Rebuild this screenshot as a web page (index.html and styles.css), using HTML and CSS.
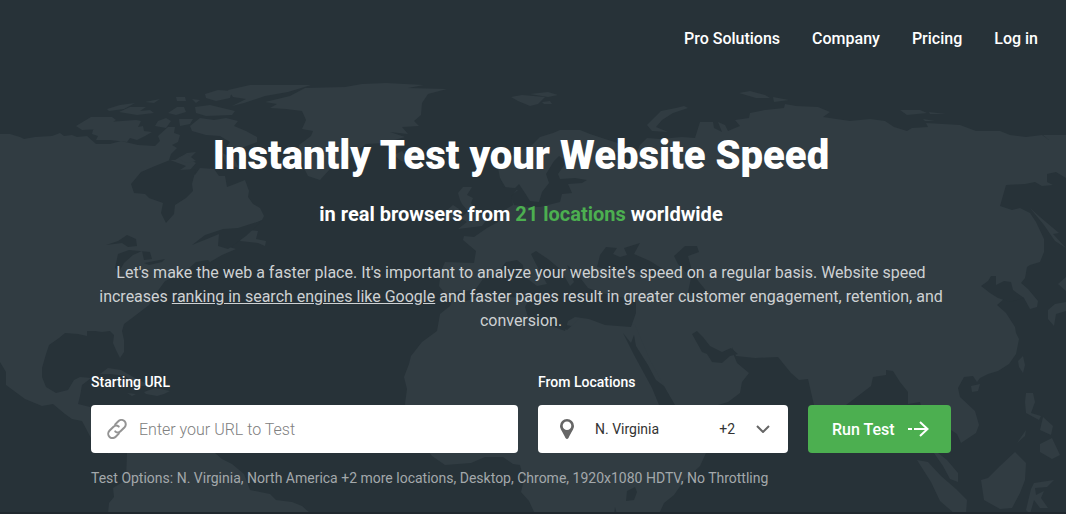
FILE: index.html
```html
<!DOCTYPE html>
<html lang="en">
<head>
    <meta charset="UTF-8">
    <meta name="viewport" content="width=device-width, initial-scale=1.0">
    <title>Website Speed Test</title>
    <link rel="stylesheet" href="styles.css">
</head>

<body>
    <div class="hero">
        <svg class="world-map" viewBox="0 0 1066 514" preserveAspectRatio="xMidYMin slice" aria-hidden="true">
            <g class="land">
                <!-- North and Central America -->
                <path d="M0 134L10 134 20 137 24 139 35 137 52 136 60 133 64 136 72 135 77 137 87 136 96 144 110 144 121 141 138 145 155 146 160 141 158 136 168 127 175 127 174 133 180 135 178 142 172 145 177 148 171 154 169 160 175 160 187 153 196 152 189 159 196 163 190 170 195 175 200 168 214 169 219 176 225 176 227 187 235 184 245 180 249 191 248 197 253 204 260 208 264 216 262 220 250 226 248 230 258 231 256 239 266 241 265 246 258 243 240 241 243 232 232 238 225 246 236 249 222 255 210 262 208 260 196 262 188 269 176 276 165 281 157 292 149 305 136 315 124 324 122 331 124 340 124 352 120 358 116 350 113 343 114 335 110 331 102 332 95 331 87 331 87 336 78 334 65 333 59 338 49 345 46 354 42 368 42 377 46 387 56 393 68 390 74 380 80 377 91 378 82 385 80 396 78 404 90 407 95 440 112 450 109 454 92 440 82 421 72 419 65 414 53 404 42 406 25 399 6 385 6 372 0 362Z"/>
                <!-- South America -->
                <path d="M127 453L126 480 113 488 114 497 109 503 108 514 311 514 302 506 292 502 276 500 270 494 250 490 244 474 232 464 222 459 215 453Z"/>
                <!-- Arctic islands -->
                <path d="M76 126L91 117 112 117 116 120 100 129 82 130ZM93 130L108 122 136 120 141 121 138 127 143 126 144 131 152 132 145 136 137 140 130 138 127 142 110 140 96 140 98 136 92 134ZM107 109L120 105 135 103 124 109 109 111ZM119 112L130 107 146 107 140 111 150 110 154 113 137 115ZM145 102L160 99 154 103ZM168 113L177 107 184 107 186 112 176 115ZM176 97L185 97 186 101 177 101ZM192 99L200 100 196 103ZM195 107L210 105 235 111 232 115 206 116 196 113ZM205 94L218 90 232 91 230 98 216 101 206 98ZM228 90L250 85 311 85 288 92 265 96 244 103 232 106 246 99 233 97ZM158 121L166 118 171 121 166 128 155 126ZM179 119L193 119 190 124 180 126ZM190 126L200 118 214 120 226 118 238 121 234 126 246 131 257 137 257 142 244 147 238 152 226 147 230 142 220 136 206 135 192 131ZM178 158L187 154 196 161 186 163ZM222 153L234 158 239 168 226 164Z"/>
                <!-- Greenland, Iceland, Svalbard -->
                <path d="M265 102L290 96 305 88 345 87 362 84 386 83 424 85 408 88 447 89 428 94 422 103 421 115 414 121 419 126 402 127 408 134 390 132 405 137 384 143 366 144 354 153 344 167 330 169 320 180 308 176 303 166 300 154 299 145 311 136 313 131 302 129 306 120 302 111 286 109 270 108 277 104ZM394 155L402 151 404 154 418 151 424 157 410 163 401 161ZM511 97L522 95 545 97 538 104 530 106 518 101ZM530 94L548 92 558 95 548 97ZM542 102L550 101 552 104 544 104Z"/>
                <!-- Britain and Ireland -->
                <path d="M458 193L463 187 472 187 467 195 473 198 471 203 478 213 487 219 482 226 458 229 467 222 461 218 468 211 462 204 460 200ZM444 213L453 205 459 209 455 218 445 221Z"/>
                <!-- Novaya Zemlya and the Siberian islands -->
                <path d="M647 125L655 117 661 111 676 108 684 106 688 108 673 113 662 120 656 127 668 132 652 131ZM739 93L750 91 765 95 770 98 756 98ZM773 97L789 100 774 102ZM900 110L920 110 927 113 907 115ZM929 112L946 114 930 114ZM923 119L935 121 925 121Z"/>
                <!-- Europe and Asia -->
                <path d="M500 178L498 168 506 159 520 151 532 145 540 137 553 133 560 130 580 130 590 134 605 139 621 144 626 152 616 155 636 154 640 145 647 138 660 139 682 137 695 138 700 122 713 122 714 128 722 132 718 122 725 125 728 131 735 128 740 126 735 120 749 118 750 113 765 110 784 108 785 104 796 106 818 107 830 112 823 117 850 121 870 119 885 121 894 127 907 131 912 128 928 127 926 123 960 125 976 131 1000 131 1010 135 1026 137 1042 135 1049 140 1043 135 1066 135 1066 178 1056 172 1047 174 1047 182 1053 185 1042 186 1035 182 1025 184 1006 185 1000 206 1012 210 1020 208 1030 213 1036 222 1044 239 1044 252 1040 262 1030 265 1027 267 1025 278 1021 283 1028 289 1038 301 1037 307 1030 309 1024 298 1012 292 997 305 1006 313 1015 327 1016 333 1019 339 1016 354 1009 364 998 371 988 374 980 378 977 382 973 376 964 377 958 388 960 397 975 411 979 425 976 433 964 441 961 443 957 434 951 430 948 440 938 453 947 460 958 473 958 482 950 479 943 466 934 453 928 430 920 402 908 404 908 392 900 382 893 371 886 370 886 375 873 377 871 386 858 396 846 405 843 440 835 446 822 430 814 405 808 379 799 380 791 373 778 357 755 358 736 356 732 347 733 353 737 363 749 373 742 382 740 393 728 402 718 405 680 420 660 400 590 330 450 300 439 286 441 271 445 262 474 263 476 251 463 240 464 236 474 237 487 228 498 222 503 211 513 205 512 196 518 188 506 188Z"/>
                <!-- Africa -->
                <path d="M455 293L480 292 525 305 567 330 580 318 635 325 650 360 674 405 716 440 706 453 700 466 683 482 674 495 664 503 659 514 535 514 529 501 521 492 524 480 520 465 513 464 503 457 485 457 471 463 445 465 432 456 410 428 405 404 407 389 404 377 409 364 411 356 422 342 437 331 440 314 450 306Z"/>
                <!-- Japan, Taiwan, the Philippines and Indonesia -->
                <path d="M1030 208L1040 217 1059 233 1053 234 1066 248 1055 241 1044 225ZM1048 310L1055 304 1066 302 1066 311 1056 314 1054 326 1048 319ZM1058 284L1066 277 1066 291ZM1018 361L1023 356 1025 365 1023 373 1019 367ZM971 386L980 384 978 391 972 392ZM1026 393L1033 393 1035 402 1031 413 1041 416 1039 420 1026 413 1025 402ZM1043 417L1053 426 1051 435 1040 430ZM1040 444L1052 438 1060 455 1052 459 1040 452ZM1017 443L1026 430 1025 436ZM981 480L988 478 1000 466 1015 452 1026 463 1025 480 1020 493 1012 508 1000 509 984 500ZM917 460L928 462 941 476 956 489 967 500 966 514 955 514 940 501 931 482ZM1031 489L1034 483 1054 480 1047 487 1035 488 1036 495 1044 491 1041 498 1048 508 1040 508 1034 500 1030 514 1026 510Z"/>
                <!-- Cuba and Hispaniola -->
                <path d="M100 374L108 368 121 370 135 378 147 384 153 386 136 386 126 376 110 374ZM144 392L155 388 170 391 164 394 157 396 146 394ZM127 393L136 394 132 396Z"/>
            </g>
            <g class="water">
                <!-- Hudson Bay and the Great Lakes -->
                <path d="M170 160L186 166 180 170 196 169 192 184 193 191 186 198 175 205 174 214 166 223 161 213 163 203 149 198 145 194 134 193 131 184 141 172 155 166ZM106 245L118 241 127 235 136 239 137 246 128 247 122 243ZM115 268L118 254 129 250 150 252 152 259 144 260 142 251 133 255 124 263 119 272ZM144 263L165 259 162 262 149 265ZM192 245L205 235 223 229 238 228 263 220 246 236 228 249 218 246 219 234 207 239Z"/>
                <!-- Baltic and White Sea -->
                <path d="M500 178L503 187 515 188 519 184 525 193 530 201 539 202 542 192 549 183 546 174 554 161 559 156 567 161 558 174 560 179 575 178 587 180 582 183 568 184 572 193 562 194 560 202 540 207 527 207 514 205 511 196 518 190 500 190ZM612 153L625 150 637 154 632 162 622 164Z"/>
                <!-- Mediterranean -->
                <path d="M454 292L475 290 483 279 497 273 506 262 517 260 523 265 524 276 537 286 547 284 536 264 531 254 536 251 548 259 560 269 570 286 574 282 567 265 575 271 588 288 602 293 625 298 636 300 636 313 631 327 605 325 589 319 575 317 568 321 565 331 546 324 528 317 525 307 530 298 505 297 478 298 461 302Z"/>
                <!-- Black Sea and Caspian -->
                <path d="M597 267L600 255 606 247 617 248 613 254 620 257 627 255 624 248 640 243 634 254 650 261 666 271 650 276 633 270 615 271ZM674 256L685 246 697 246 699 252 688 256 692 271 701 268 695 277 708 293 697 301 688 292 691 278 678 264Z"/>
                <!-- Red Sea and Persian Gulf -->
                <path d="M623 333L631 343 634 335 636 346 648 365 656 380 664 386 675 405 659 405 652 388 634 355ZM692 334L697 331 703 337 710 346 722 352 731 348 738 354 730 356 722 363 712 362 707 354 702 352Z"/>
                <!-- Yellow Sea and Lake Victoria -->
                <path d="M981 286L988 281 991 276 996 276 996 285 1004 281 1011 282 1013 290 1024 298 1010 302 998 298 990 293ZM627 491L635 487 637 492 634 500 626 501ZM615 507L617 514 614 514Z"/>
            </g>
        </svg>

        <nav class="nav-bar">
            <a class="nav-item" href="#">Pro Solutions</a>
            <a class="nav-item" href="#">Company</a>
            <a class="nav-item" href="#">Pricing</a>
            <a class="nav-item" href="#">Log in</a>
        </nav>

        <div class="content">
            <h1 class="title">Instantly Test your Website Speed</h1>
            <h2 class="subtitle">in real browsers from <span class="highlight">21 locations</span> worldwide</h2>
            <p class="intro">Let's make the web a faster place. It's important to analyze your website's speed on a regular basis. Website speed increases <a class="intro-link" href="#">ranking in search engines like Google</a> and faster pages result in greater customer engagement, retention, and conversion.</p>

            <form class="test-form">
                <div class="field url-field">
                    <label class="field-label" for="url">Starting URL</label>
                    <div class="control">
                        <svg class="link-icon" viewBox="0 0 20 20" aria-hidden="true">
                            <path d="M8.2 5.4L11.3 2.3A3.8 3.8 0 0 1 17.6 8.2L13.5 12.3A3.8 3.8 0 0 1 8.3 12.4"/>
                            <path d="M11.8 14.6L8.7 17.7A3.8 3.8 0 0 1 2.4 11.8L6.5 7.7A3.8 3.8 0 0 1 11.7 7.6"/>
                        </svg>
                        <input class="url-input" id="url" type="text" placeholder="Enter your URL to Test">
                    </div>
                </div>
                <div class="field location-field">
                    <label class="field-label" for="location">From Locations</label>
                    <div class="control">
                        <svg class="pin-icon" viewBox="0 0 14 20" aria-hidden="true">
                            <path fill-rule="evenodd" d="M7 0A7 7 0 0 0 0 7C0 10 3 13.500 5.500 19Q7 21 8.500 19C11 13.500 14 10 14 7A7 7 0 0 0 7 0ZM7 2.500A4.300 4.300 0 1 1 7 11.100A4.300 4.300 0 0 1 7 2.500Z"/>
                        </svg>
                        <select class="location-select" id="location">
                            <option>N. Virginia</option>
                        </select>
                        <span class="more-count">+2</span>
                        <svg class="chevron-icon" viewBox="0 0 14 8" aria-hidden="true">
                            <path d="M1 1L7 7L13 1"/>
                        </svg>
                    </div>
                </div>
                <button class="run-btn" type="button">
                    Run Test
                    <svg class="arrow-icon" viewBox="0 0 21 16" aria-hidden="true">
                        <path d="M0 8H4M6 8H19M12 1L19.500 8L12 15"/>
                    </svg>
                </button>
            </form>

            <p class="options">Test Options: N. Virginia, North America +2 more locations, Desktop, Chrome, 1920x1080 HDTV, No Throttling</p>
        </div>
    </div>
</body>
</html>
```
FILE: styles.css
```css
/* General Page Styling */
* {
    box-sizing: border-box;
}

body, html {
    font-family: Roboto, sans-serif;
    background-color: #273238;
    color: #fff;
    padding: 0;
    margin: 0;
}

/* Hero */
.hero {
    position: relative;
    overflow: hidden;
    padding: 0 24px 24px 0;
    border-bottom: 2px solid #20282e;
}

.world-map {
    position: absolute;
    top: 0;
    left: 0;
    width: 100%;
    height: 100%;
}

.land {
    fill: #313c42;
}

.water {
    fill: #273238;
}

/* Navigation */
.nav-bar {
    position: relative;
    display: flex;
    justify-content: flex-end;
    gap: 32px;
    padding: 27px 4px 26px 24px;
}

.nav-item {
    color: #fff;
    font-size: 16px;
    font-weight: 500;
    line-height: 24px;
    text-decoration: none;
}

/* Main Content */
.content {
    position: relative;
    max-width: 860px;
    margin: 0 auto;
    padding-top: 53px;
}

.title {
    margin: 0;
    font-size: 40px;
    font-weight: 900;
    line-height: 52px;
    text-align: center;
}

.subtitle {
    margin: 18px 0 33px;
    font-size: 20px;
    font-weight: 700;
    line-height: 28px;
    text-align: center;
}

.highlight {
    color: #4caf50;
}

.intro {
    margin: 0 0 39px;
    color: #ced1d3;
    font-size: 16px;
    line-height: 24px;
    text-align: center;
}

.intro-link {
    color: inherit;
}

/* Test Form */
.test-form {
    display: flex;
    align-items: flex-end;
    gap: 20px;
}

.url-field {
    flex: 1;
}

.location-field {
    flex: 0 0 250px;
}

.field-label {
    display: block;
    margin-bottom: 13px;
    font-size: 14px;
    font-weight: 500;
    line-height: 20px;
}

.control {
    display: flex;
    align-items: center;
    height: 48px;
    background: #fff;
    border-radius: 4px;
}

.url-input {
    flex: 1;
    min-width: 0;
    height: 48px;
    padding: 0 12px;
    background: transparent;
    border: none;
    color: #333;
    font-family: inherit;
    font-size: 16px;
    font-weight: 300;
}

.url-input::placeholder {
    color: #808080;
}

.link-icon {
    width: 20px;
    height: 20px;
    margin-left: 16px;
    fill: none;
    stroke: #949494;
    stroke-width: 2;
    stroke-linecap: round;
}

.location-select {
    flex: 1;
    height: 48px;
    padding: 0;
    appearance: none;
    background: transparent;
    border: none;
    color: #333;
    font-family: inherit;
    font-size: 14px;
}

.pin-icon {
    width: 14px;
    height: 20px;
    margin: 0 21px 0 22px;
    fill: #666;
}

.more-count {
    color: #333;
    font-size: 14px;
}

.chevron-icon {
    width: 14px;
    height: 8px;
    margin: 0 18px 0 21px;
    fill: none;
    stroke: #666;
    stroke-width: 2;
}

.run-btn {
    display: flex;
    align-items: center;
    justify-content: space-between;
    flex: 0 0 143px;
    height: 48px;
    padding: 0 22px 0 24px;
    background: #4caf50;
    border: none;
    border-radius: 4px;
    color: #fff;
    cursor: pointer;
    font-family: inherit;
    font-size: 16px;
    font-weight: 500;
}

.run-btn:hover {
    background: #43a047;
}

.arrow-icon {
    width: 21px;
    height: 16px;
    fill: none;
    stroke: #fff;
    stroke-width: 2;
}

.options {
    margin: 15px 0 0;
    color: #a3a8ab;
    font-size: 14px;
    line-height: 20px;
}

@media (max-width: 760px) {
    .hero {
        padding: 0 16px 24px;
    }

    .test-form {
        flex-direction: column;
        align-items: stretch;
    }

    .url-field,
    .location-field,
    .run-btn {
        flex: none;
    }

    .run-btn {
        height: 48px;
    }
}
```
